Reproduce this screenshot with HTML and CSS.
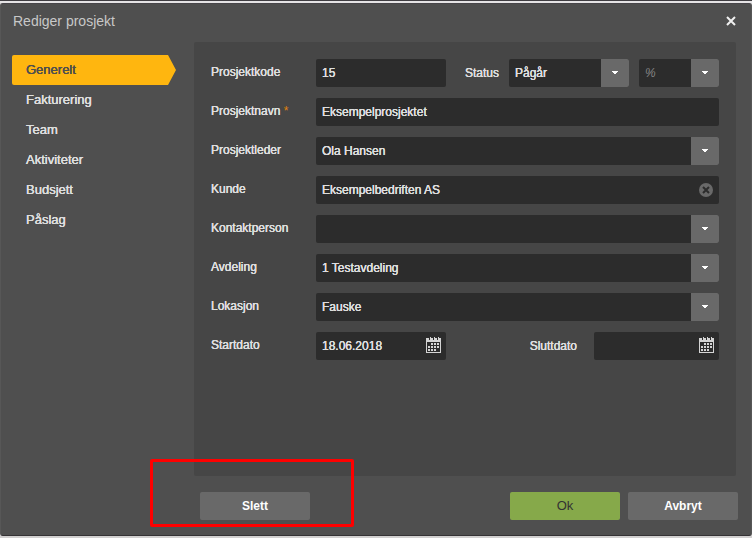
FILE: index.html
```html
<!DOCTYPE html>
<html lang="no">
<head>
    <meta charset="utf-8">
    <title>Rediger prosjekt</title>
    <link rel="stylesheet" href="styles.css">
</head>
<body>
    <svg class="defs" width="0" height="0" aria-hidden="true">
        <symbol id="caret" viewBox="0 0 6 3">
            <path d="M0 0h6v1H5v1H4v1H2V2H1V1H0z"/>
        </symbol>
        <symbol id="calendar" viewBox="0 0 15 16">
            <path fill-rule="evenodd" d="M0 1h3v2h1V1h3v2h1V1h3v2h1V1h3v15H0zM1 5v10h13V5z"/>
            <path d="M4 0h1v3H4zM8 0h1v3H8zM12 0h1v3h-1z"/>
            <path d="M5 6h2v2H5zM8 6h2v2H8zM11 6h2v2h-2zM2 9h2v2H2zM5 9h2v2H5zM8 9h2v2H8zM11 9h2v2h-2zM2 12h2v2H2zM5 12h2v2H5zM8 12h2v2H8z"/>
        </symbol>
    </svg>

    <main class="dialog">
        <header class="dialog-header">
            <h1>Rediger prosjekt</h1>
            <button class="close" type="button" aria-label="Lukk">
                <svg width="10" height="10" viewBox="0 0 10 10"><path d="M1 1l8 8M9 1l-8 8"/></svg>
            </button>
        </header>

        <div class="dialog-body">
            <nav class="tabs">
                <a class="tab active" href="#generelt">Generelt</a>
                <a class="tab" href="#fakturering">Fakturering</a>
                <a class="tab" href="#team">Team</a>
                <a class="tab" href="#aktiviteter">Aktiviteter</a>
                <a class="tab" href="#budsjett">Budsjett</a>
                <a class="tab" href="#paslag">Påslag</a>
            </nav>

            <form class="panel" id="form">
                <div class="row">
                    <label for="code">Prosjektkode</label>
                    <div class="fields">
                        <input class="short" type="text" id="code" value="15">
                        <label class="inline" for="status">Status</label>
                        <div class="select status">
                            <select id="status"><option>Pågår</option></select>
                            <span class="arrow"><svg width="6" height="3"><use href="#caret"/></svg></span>
                        </div>
                        <div class="select percent">
                            <select id="percent" aria-label="Prosent"><option>%</option></select>
                            <span class="arrow"><svg width="6" height="3"><use href="#caret"/></svg></span>
                        </div>
                    </div>
                </div>
                <div class="row">
                    <label for="name">Prosjektnavn <span class="required">*</span></label>
                    <div class="fields"><input type="text" id="name" value="Eksempelprosjektet" required></div>
                </div>
                <div class="row">
                    <label for="leader">Prosjektleder</label>
                    <div class="select">
                        <select id="leader"><option>Ola Hansen</option></select>
                        <span class="arrow"><svg width="6" height="3"><use href="#caret"/></svg></span>
                    </div>
                </div>
                <div class="row">
                    <label for="customer">Kunde</label>
                    <div class="with-icon">
                        <input type="text" id="customer" value="Eksempelbedriften AS">
                        <button class="clear" type="button" aria-label="Fjern kunde">
                            <svg width="14" height="14" viewBox="0 0 14 14"><circle cx="7" cy="7" r="7"/><path d="M4 4l6 6M10 4l-6 6"/></svg>
                        </button>
                    </div>
                </div>
                <div class="row">
                    <label for="contact">Kontaktperson</label>
                    <div class="select">
                        <select id="contact"><option></option></select>
                        <span class="arrow"><svg width="6" height="3"><use href="#caret"/></svg></span>
                    </div>
                </div>
                <div class="row">
                    <label for="department">Avdeling</label>
                    <div class="select">
                        <select id="department"><option>1 Testavdeling</option></select>
                        <span class="arrow"><svg width="6" height="3"><use href="#caret"/></svg></span>
                    </div>
                </div>
                <div class="row">
                    <label for="location">Lokasjon</label>
                    <div class="select">
                        <select id="location"><option>Fauske</option></select>
                        <span class="arrow"><svg width="6" height="3"><use href="#caret"/></svg></span>
                    </div>
                </div>
                <div class="row">
                    <label for="start">Startdato</label>
                    <div class="fields">
                        <div class="with-icon short">
                            <input type="text" id="start" value="18.06.2018">
                            <button class="calendar" type="button" aria-label="Velg startdato"><svg width="15" height="16"><use href="#calendar"/></svg></button>
                        </div>
                        <label class="inline end-label" for="end">Sluttdato</label>
                        <div class="with-icon end">
                            <input type="text" id="end">
                            <button class="calendar" type="button" aria-label="Velg sluttdato"><svg width="15" height="16"><use href="#calendar"/></svg></button>
                        </div>
                    </div>
                </div>
            </form>
        </div>

        <footer class="dialog-footer">
            <div class="delete">
                <button class="btn" type="button">Slett</button>
                <span class="highlight"></span>
            </div>
            <button class="btn ok" type="submit" form="form">Ok</button>
            <button class="btn" type="button">Avbryt</button>
        </footer>
    </main>
</body>
</html>
```

FILE: styles.css
```css
* {
    box-sizing: border-box;
}

body {
    display: flex;
    flex-direction: column;
    min-height: 100vh;
    margin: 0;
    padding-bottom: 2px;
    background-color: #d2d0d0;
    color: #dedede;
    font-family: "Liberation Sans", Arial, sans-serif;
    font-size: 12px;
    line-height: 16px;
    text-shadow: 0 0 0 currentColor, 0 0 0 currentColor;
}

/* edge of the page behind the dialog */
body::before {
    content: "";
    height: 2px;
    background-color: #e6e4e6;
    border-top: 1px solid #403e42;
}

.defs {
    position: absolute;
}

svg {
    display: block;
    fill: currentColor;
}

.dialog {
    flex: 1;
    display: flex;
    flex-direction: column;
    background-color: #4f4f4f;
    border: 1px solid #575757;
    border-top-color: #48464a;
    border-bottom-color: #353335;
    border-radius: 3px;
}

.dialog-header {
    display: flex;
    justify-content: space-between;
    align-items: center;
    height: 39px;
    margin-bottom: -1px;
    padding: 0 15px 5px 12px;
}

h1 {
    margin: 0;
    color: #c8c8c8;
    font-size: 14px;
    font-weight: normal;
    text-shadow: none;
}

button {
    padding: 0;
    border: none;
    background: none;
    color: inherit;
    font: inherit;
    text-shadow: inherit;
    cursor: pointer;
}

.close path {
    stroke: #f0f0f0;
    stroke-width: 2;
}

.dialog-body {
    flex: 1;
    display: grid;
    grid-template-columns: 164px 1fr;
    gap: 18px;
    padding: 0 15px 0 11px;
}

.tabs {
    padding-top: 13px;
}

.tab {
    display: block;
    padding: 7px 14px;
    color: inherit;
    font-size: 13px;
    text-decoration: none;
}

.tab.active {
    background-color: #ffb60f;
    border-radius: 2px 0 0 2px;
    color: #4f4f4f;
    clip-path: polygon(0 0, calc(100% - 8px) 0, 100% 50%, calc(100% - 8px) 100%, 0 100%);
}

.panel {
    display: flex;
    flex-direction: column;
    gap: 11px;
    padding: 17px;
    background-color: #464646;
    border-radius: 2px;
}

.row {
    display: grid;
    grid-template-columns: 105px 1fr;
}

.row > label {
    padding-top: 5px;
}

.required {
    color: #e0820f;
    text-shadow: none;
}

.fields {
    display: flex;
    align-items: center;
}

input,
select {
    width: 100%;
    height: 28px;
    margin: 0;
    padding: 0 6px;
    border: none;
    border-radius: 2px;
    background-color: #2c2c2c;
    color: inherit;
    font: inherit;
    text-shadow: inherit;
    appearance: none;
}

.short {
    width: 130px;
}

.inline {
    margin: 0 10px 0 auto;
}

/* arrow shares the grid cell with the select */
.select,
.with-icon {
    display: grid;
    align-items: center;
}

.select > *,
.with-icon > * {
    grid-area: 1 / 1;
}

.arrow {
    display: flex;
    justify-content: center;
    align-items: center;
    justify-self: end;
    width: 28px;
    height: 28px;
    padding-bottom: 2px;
    border-radius: 0 2px 2px 0;
    background-color: #696969;
    color: #fff;
    pointer-events: none;
}

.status {
    width: 120px;
}

.percent {
    width: 80px;
    margin-left: 10px;
}

.percent select {
    color: #858585;
    font-style: italic;
    text-shadow: none;
}

.end-label {
    margin-right: 17px;
}

.end {
    width: 125px;
}

.clear,
.calendar {
    justify-self: end;
    margin-right: 6px;
}

.calendar {
    margin-right: 5px;
    padding-bottom: 2px;
    color: #d4d4d4;
}

.clear circle {
    fill: #696969;
}

.clear path {
    stroke: #2c2c2c;
    stroke-width: 2;
}

.dialog-footer {
    display: flex;
    gap: 8px;
    padding: 16px 13px 15px 199px;
}

.delete {
    position: relative;
    margin-right: auto;
}

.btn {
    display: block;
    width: 110px;
    height: 28px;
    border-radius: 2px;
    background-color: #696969;
    color: #fff;
    font-weight: bold;
    text-shadow: none;
}

.ok {
    background-color: #86a94a;
    color: #333;
    font-size: 13px;
    font-weight: normal;
}

.highlight {
    position: absolute;
    inset: -33px -44px -7px -50px;
    border: 3px solid #f00;
    border-radius: 2px;
    pointer-events: none;
}
```
